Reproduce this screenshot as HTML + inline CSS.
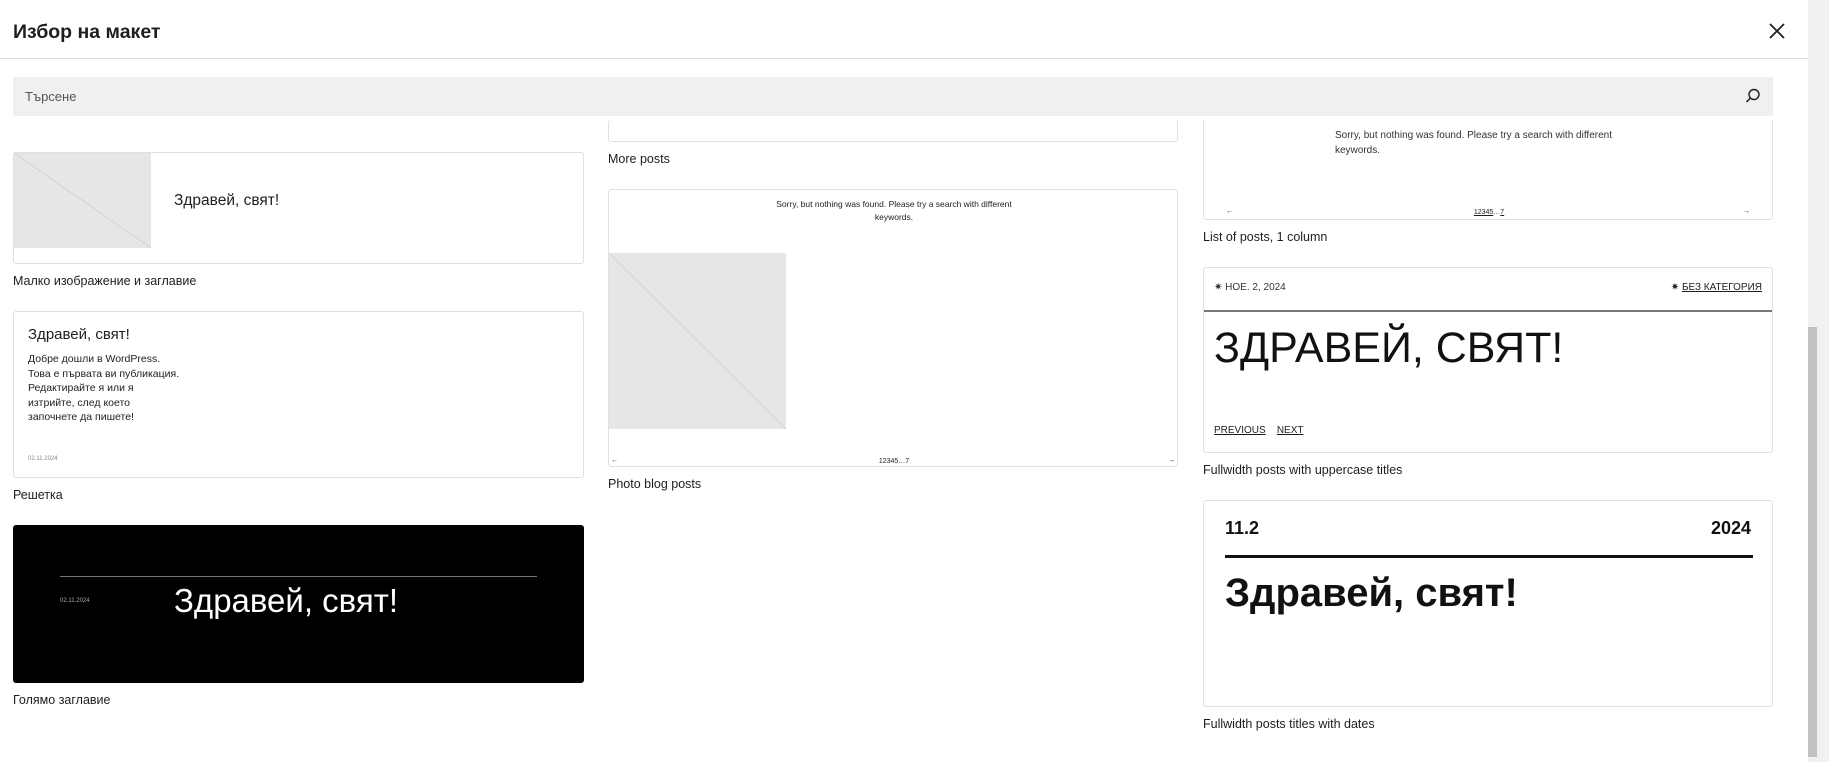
<!DOCTYPE html>
<html><head><meta charset="utf-8"><style>
*{margin:0;padding:0;box-sizing:border-box}
body{width:1829px;height:762px;overflow:hidden;background:#fff;font-family:"Liberation Sans","DejaVu Sans",sans-serif;color:#1e1e1e;position:relative}
.a{position:absolute}
.card{position:absolute;border:1px solid #e0e0e0;border-radius:3px;background:#fff;overflow:hidden}
.lbl{position:absolute;font-size:12.5px;color:#1e1e1e}
.ph{position:absolute;background:#e6e6e6;overflow:hidden}
.ph svg{width:100%;height:100%;display:block}
u{text-decoration:underline}
</style></head><body>
<div class="a" style="left:13px;top:21px;font-size:19.5px;font-weight:bold">Избор на макет</div>
<svg class="a" style="left:1765px;top:19px" width="24" height="24" viewBox="0 0 24 24"><path d="M5 5L19 19M19 5L5 19" stroke="#1e1e1e" stroke-width="1.8"/></svg>
<div class="a" style="left:0;top:58px;width:1808px;height:1px;background:#ddd"></div>
<div class="a" style="left:13px;top:77px;width:1760px;height:39px;background:#f0f0f0"></div>
<div class="a" style="left:25px;top:89px;font-size:13px;color:#555">Търсене</div>
<svg class="a" style="left:1744px;top:87px" width="18" height="18" viewBox="0 0 18 18"><circle cx="10" cy="7.5" r="5" fill="none" stroke="#1e1e1e" stroke-width="1.4"/><path d="M6.5 11L2.5 15" stroke="#1e1e1e" stroke-width="1.5"/></svg>
<div class="a" style="left:1808px;top:0;width:21px;height:762px;background:#f1f1f1"></div>
<div class="a" style="left:1808px;top:327px;width:9px;height:430px;background:#c1c1c1"></div>

<div class="card" style="left:13px;top:152px;width:571px;height:112px">
 <div class="ph" style="left:0;top:0;width:137px;height:95px"><svg viewBox="0 0 137 95" preserveAspectRatio="none"><line x1="0" y1="0" x2="137" y2="95" stroke="#d2d2d2"/></svg></div>
 <div class="a" style="left:160px;top:39px;font-size:15.5px">Здравей, свят!</div>
</div>
<div class="lbl" style="left:13px;top:274px">Малко изображение и заглавие</div>

<div class="card" style="left:13px;top:311px;width:571px;height:167px">
 <div class="a" style="left:14px;top:14px;font-size:15px">Здравей, свят!</div>
 <div class="a" style="left:14px;top:40px;font-size:10.5px;line-height:14.5px;width:152px">Добре дошли в WordPress. Това е първата ви публикация. Редактирайте я или я изтрийте, след което започнете да пишете!</div>
 <div class="a" style="left:14px;top:144px;font-size:6px;color:#888">02.11.2024</div>
</div>
<div class="lbl" style="left:13px;top:488px">Решетка</div>

<div class="a" style="left:13px;top:525px;width:571px;height:158px;background:#000;border-radius:3px">
 <div class="a" style="left:47px;top:51px;width:477px;height:1px;background:#777"></div>
 <div class="a" style="left:47px;top:73px;font-size:6px;color:#aaa">02.11.2024</div>
 <div class="a" style="left:161px;top:57px;font-size:33px;color:#fff">Здравей, свят!</div>
</div>
<div class="lbl" style="left:13px;top:693px">Голямо заглавие</div>

<div class="card" style="left:608px;top:120px;width:570px;height:22px;border-top:none"></div>
<div class="lbl" style="left:608px;top:152px">More posts</div>
<div class="card" style="left:608px;top:189px;width:570px;height:278px">
 <div class="a" style="left:0;top:8px;width:570px;text-align:center;font-size:8.5px;line-height:13px">Sorry, but nothing was found. Please try a search with different<br>keywords.</div>
 <div class="ph" style="left:0;top:63px;width:177px;height:176px"><svg viewBox="0 0 177 176" preserveAspectRatio="none"><line x1="0" y1="0" x2="177" y2="176" stroke="#d2d2d2"/></svg></div>
 <div class="a" style="left:2px;top:267px;font-size:7px">←</div>
 <div class="a" style="left:0;top:268px;width:570px;text-align:center;font-size:7px">12345…7</div>
 <div class="a" style="right:2px;top:267px;font-size:7px">→</div>
</div>
<div class="lbl" style="left:608px;top:477px">Photo blog posts</div>

<div class="card" style="left:1203px;top:120px;width:570px;height:100px;border-top:none">
 <div class="a" style="left:131px;top:8px;font-size:10px;line-height:15px;color:#333">Sorry, but nothing was found. Please try a search with different<br>keywords.</div>
 <div class="a" style="left:22px;top:88px;font-size:7px">←</div>
 <div class="a" style="left:0;top:89px;width:570px;text-align:center;font-size:7px"><u>12345</u>…<u>7</u></div>
 <div class="a" style="right:22px;top:88px;font-size:7px">→</div>
</div>
<div class="lbl" style="left:1203px;top:230px">List of posts, 1 column</div>

<div class="card" style="left:1203px;top:267px;width:570px;height:186px">
 <div class="a" style="left:10px;top:14px;font-size:10px;color:#333">✷ НОЕ. 2, 2024</div>
 <div class="a" style="right:10px;top:14px;font-size:10px">✷ <u>БЕЗ КАТЕГОРИЯ</u></div>
 <div class="a" style="left:0;top:42px;width:570px;height:2px;background:#777"></div>
 <div class="a" style="left:10px;top:56px;font-size:43px;color:#111">ЗДРАВЕЙ, СВЯТ!</div>
 <div class="a" style="left:10px;top:157px;font-size:10px"><u>PREVIOUS</u>&nbsp;&nbsp;&nbsp;&nbsp;<u>NEXT</u></div>
</div>
<div class="lbl" style="left:1203px;top:463px">Fullwidth posts with uppercase titles</div>

<div class="card" style="left:1203px;top:500px;width:570px;height:207px">
 <div class="a" style="left:21px;top:17px;font-size:18px;font-weight:bold;color:#111">11.2</div>
 <div class="a" style="right:21px;top:17px;font-size:18px;font-weight:bold;color:#111">2024</div>
 <div class="a" style="left:21px;top:54px;width:528px;height:3px;background:#111"></div>
 <div class="a" style="left:21px;top:70px;font-size:40px;font-weight:bold;color:#111">Здравей, свят!</div>
</div>
<div class="lbl" style="left:1203px;top:717px">Fullwidth posts titles with dates</div>
</body></html>
